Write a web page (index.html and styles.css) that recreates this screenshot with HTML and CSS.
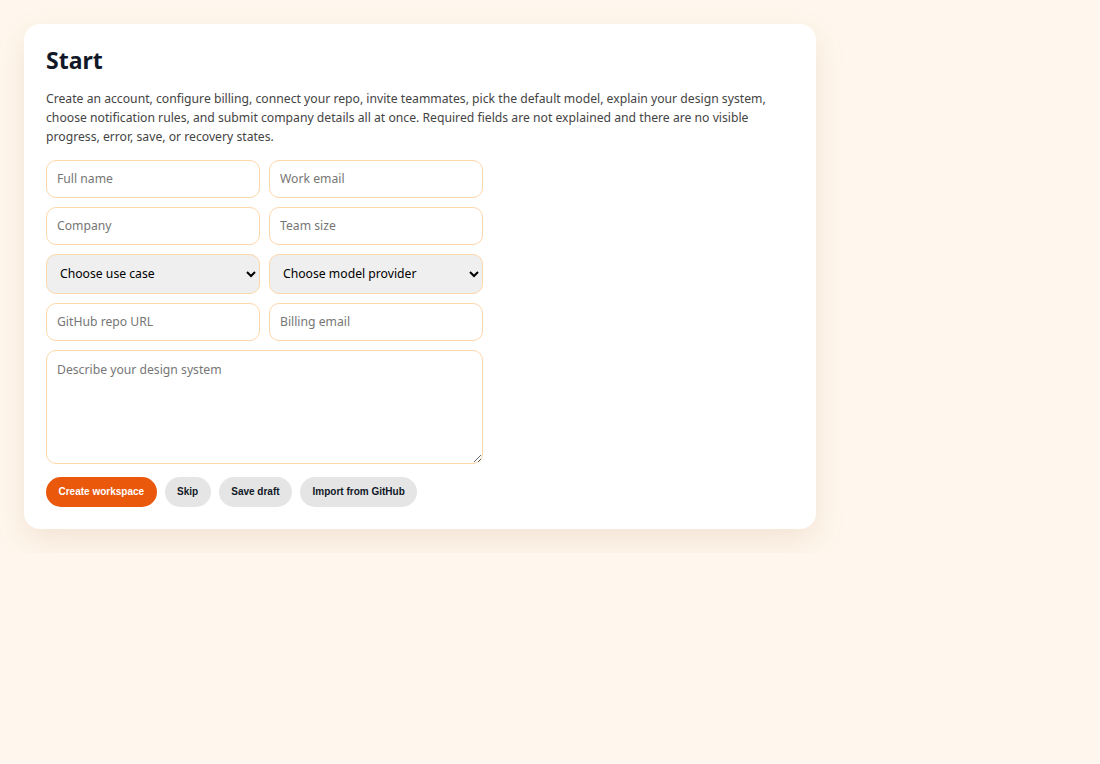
FILE: index.html
```html
<!DOCTYPE html>
<html lang="en">
<head>
    <meta charset="UTF-8">
    <meta name="viewport" content="width=device-width, initial-scale=1.0">
    <title>Start</title>
    <link rel="stylesheet" href="styles.css">
</head>
<body>
    <div class="card">
        <h1>Start</h1>
        <p class="intro">Create an account, configure billing, connect your repo, invite teammates, pick the default model, explain your design system, choose notification rules, and submit company details all at once. Required fields are not explained and there are no visible progress, error, save, or recovery states.</p>
        <form class="form-grid">
            <input type="text" placeholder="Full name">
            <input type="email" placeholder="Work email">
            <input type="text" placeholder="Company">
            <input type="text" placeholder="Team size">
            <select>
                <option>Choose use case</option>
            </select>
            <select>
                <option>Choose model provider</option>
            </select>
            <input type="url" placeholder="GitHub repo URL">
            <input type="email" placeholder="Billing email">
            <textarea class="wide" placeholder="Describe your design system"></textarea>
        </form>
        <div class="actions">
            <button class="primary">Create workspace</button>
            <button>Skip</button>
            <button>Save draft</button>
            <button>Import from GitHub</button>
        </div>
    </div>
</body>
</html>
```

FILE: styles.css
```css
body {
    font-family: 'Noto Sans', sans-serif;
    background: #fff7ed;
    margin: 0;
    padding: 24px;
}
.card {
    background: #fff;
    width: 748px;
    padding: 22px;
    border-radius: 16px;
    box-shadow: 0 12px 32px rgba(154, 92, 40, 0.12);
}
h1 {
    font-size: 23px;
    color: #111827;
    margin: 0 0 13px;
    line-height: 1.3;
}
.intro {
    font-size: 12.2px;
    line-height: 19px;
    color: #444;
    margin: 0 0 14px;
}
.form-grid {
    display: grid;
    grid-template-columns: 1fr 1fr;
    gap: 9px;
    width: 437px;
}
input, select, textarea {
    font-family: 'Noto Sans', sans-serif;
    font-size: 12.2px;
    border: 1px solid #fed7aa;
    border-radius: 10px;
    padding: 0 10px;
    height: 38px;
    box-sizing: border-box;
    width: 100%;
    color: #111;
}
input::placeholder, textarea::placeholder {
    color: #767676;
}
select {
    height: 40px;
    background-color: #efefef;
    padding: 0 6px 0 9px;
    color: #000;
}
textarea {
    grid-column: span 2;
    height: 114px;
    padding: 10px;
    resize: vertical;
}
.actions {
    display: flex;
    gap: 8px;
    margin-top: 13px;
}
button {
    border: none;
    border-radius: 999px;
    background: #e5e5e5;
    color: #111827;
    font-family: 'Liberation Sans', Arial, sans-serif;
    font-weight: bold;
    font-size: 10px;
    height: 30px;
    padding: 0 12.5px;
    cursor: pointer;
}
button.primary {
    background: #ea580c;
    color: #fff;
}
```
